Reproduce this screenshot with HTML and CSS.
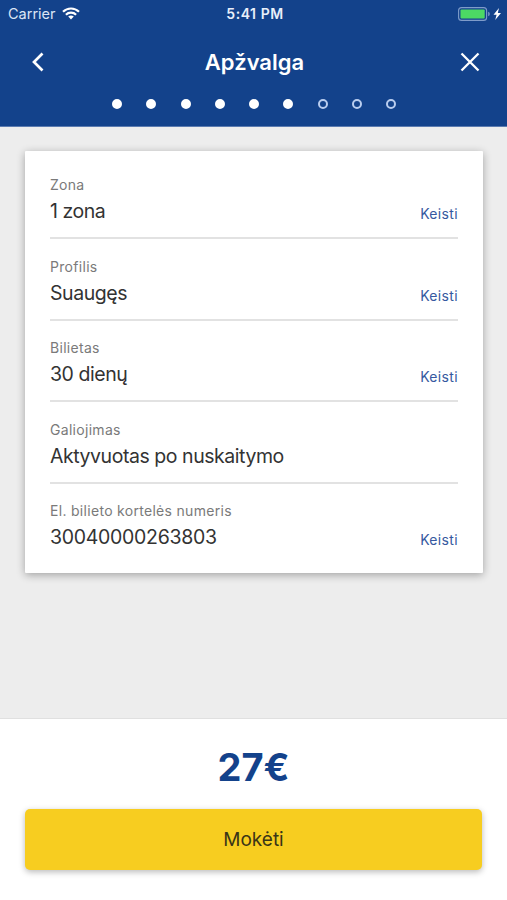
FILE: index.html
```html
<!DOCTYPE html>
<html lang="lt">
<head>
<meta charset="utf-8">
<title>Apžvalga</title>
<link rel="stylesheet" href="styles.css">
</head>
<body>
<header class="header">
  <div class="status">
    <div class="status-left">
      <span class="carrier">Carrier</span>
      <svg class="wifi" viewBox="0 0 18 13" width="18" height="13"><g fill="none" stroke="#fff" stroke-width="2.2"><path d="M1 4.8C5.5.4 12.500.4 17 4.800"/><path d="M3.900 7.700C6.700 5 11.300 5 14.100 7.700"/></g><path d="M9 12.400 6.200 9.600Q9 7.300 11.800 9.600Z" fill="#fff"/></svg>
    </div>
    <span class="clock">5:41 PM</span>
    <div class="status-right">
      <svg viewBox="0 0 44 14" width="44" height="14"><rect x=".6" y=".6" width="28" height="12.800" rx="3" fill="none" stroke="#7f9cca" stroke-width="1.100"/><rect x="2.500" y="2.500" width="24.200" height="9" rx="1" fill="#4cd964"/><path d="M30.200 4.800q1.600.4 1.600 2.200t-1.600 2.200z" fill="#7f9cca"/><path d="M41 1 35.500 7.800h3.100L37.200 13 43 5.900h-3.200z" fill="#fff"/></svg>
    </div>
  </div>
  <nav class="nav">
    <svg class="back" viewBox="0 0 14 20" width="14" height="20"><path d="M12.500 1.500 4 10l8.500 8.500" fill="none" stroke="#fff" stroke-width="2.700"/></svg>
    <h1 class="title">Apžvalga</h1>
    <svg class="close" viewBox="0 0 20 20" width="20" height="20"><path d="M1.500 1.500l17 17M18.500 1.500l-17 17" fill="none" stroke="#fff" stroke-width="2.300"/></svg>
  </nav>
  <div class="steps">
    <i class="dot full"></i><i class="dot full"></i><i class="dot full"></i><i class="dot full"></i><i class="dot full"></i><i class="dot full"></i><i class="dot"></i><i class="dot"></i><i class="dot"></i>
  </div>
</header>
<main class="content">
  <section class="card">
    <div class="row"><div><div class="label">Zona</div><div class="value">1 zona</div></div><a class="edit">Keisti</a></div>
    <div class="row"><div><div class="label">Profilis</div><div class="value">Suaugęs</div></div><a class="edit">Keisti</a></div>
    <div class="row"><div><div class="label">Bilietas</div><div class="value">30 dienų</div></div><a class="edit">Keisti</a></div>
    <div class="row"><div><div class="label">Galiojimas</div><div class="value">Aktyvuotas po nuskaitymo</div></div></div>
    <div class="row"><div><div class="label">El. bilieto kortelės numeris</div><div class="value number">30040000263803</div></div><a class="edit">Keisti</a></div>
  </section>
</main>
<footer class="footer">
  <div class="price">27€</div>
  <button class="pay">Mokėti</button>
</footer>
</body>
</html>
```
FILE: styles.css
```css
* { box-sizing: border-box; }
body {
  margin: 0;
  height: 900px;
  display: flex;
  flex-direction: column;
  background: #ededed;
  font-family: Inter, "Liberation Sans", sans-serif;
  color: #333;
  overflow: hidden;
}
svg { display: block; }
.header { height: 127px; background: #13428b; color: #fff; border-bottom: 1px solid #5b7bb0; }
.status {
  height: 27px;
  display: grid;
  grid-template-columns: 1fr auto 1fr;
  align-items: center;
  padding: 0 5px 0 8px;
}
.status-left { display: flex; align-items: center; gap: 6px; }
.carrier { font-size: 14.5px; color: #dbe5f5; }
.clock { font-size: 14px; font-weight: 600; letter-spacing: 0.55px; color: #e8effa; }
.status-right { display: flex; justify-content: flex-end; }
.nav {
  height: 70px;
  display: flex;
  align-items: center;
  justify-content: space-between;
  padding: 0 27px 0 30px;
}
.title { margin: 0 0 0 5px; font-size: 22px; font-weight: 600; line-height: 30px; }
.steps { display: flex; justify-content: center; gap: 24.250px; padding: 1.5px 0 0 1px; }
.dot { width: 10px; height: 10px; border-radius: 50%; border: 2px solid #b9cdef; }
.full { background: #fff; border-color: #fff; }
.content { flex: 1; padding: 24px 24px 0 25px; }
.card {
  height: 422px;
  padding: 7px 25px 0;
  background: #fff;
  border-radius: 1px;
  box-shadow: 0 2px 8px rgba(0, 0, 0, 0.32);
}
.row {
  height: 81.4px;
  display: flex;
  justify-content: space-between;
  align-items: flex-end;
  padding-bottom: 13px;
  border-bottom: 2px solid #e2e2e2;
}
.row:last-child { border-bottom: 0; padding-bottom: 15px; }
.label { font-size: 14px; line-height: 20px; letter-spacing: 0.3px; color: #7a7a7a; }
.value { margin-top: 3px; font-size: 19.5px; line-height: 26px; letter-spacing: -0.45px; }
.number { letter-spacing: -0.3px; }
.edit { font-size: 14px; line-height: 20px; letter-spacing: 0.35px; color: #3659a0; }
.footer {
  height: 182px;
  display: flex;
  flex-direction: column;
  padding: 23px 25px 0;
  background: #fff;
  border-top: 1px solid #e0e0e0;
}
.price { text-align: center; font-size: 38px; line-height: 50px; font-weight: 700; color: #13428b; }
.pay {
  margin-top: 17px;
  height: 61px;
  border: 0;
  border-radius: 5px;
  background: #f7cd20;
  font: 400 19px Inter, "Liberation Sans", sans-serif;
  color: #3a3517;
  box-shadow: 0 2px 6px rgba(0, 0, 0, 0.28);
}
```
